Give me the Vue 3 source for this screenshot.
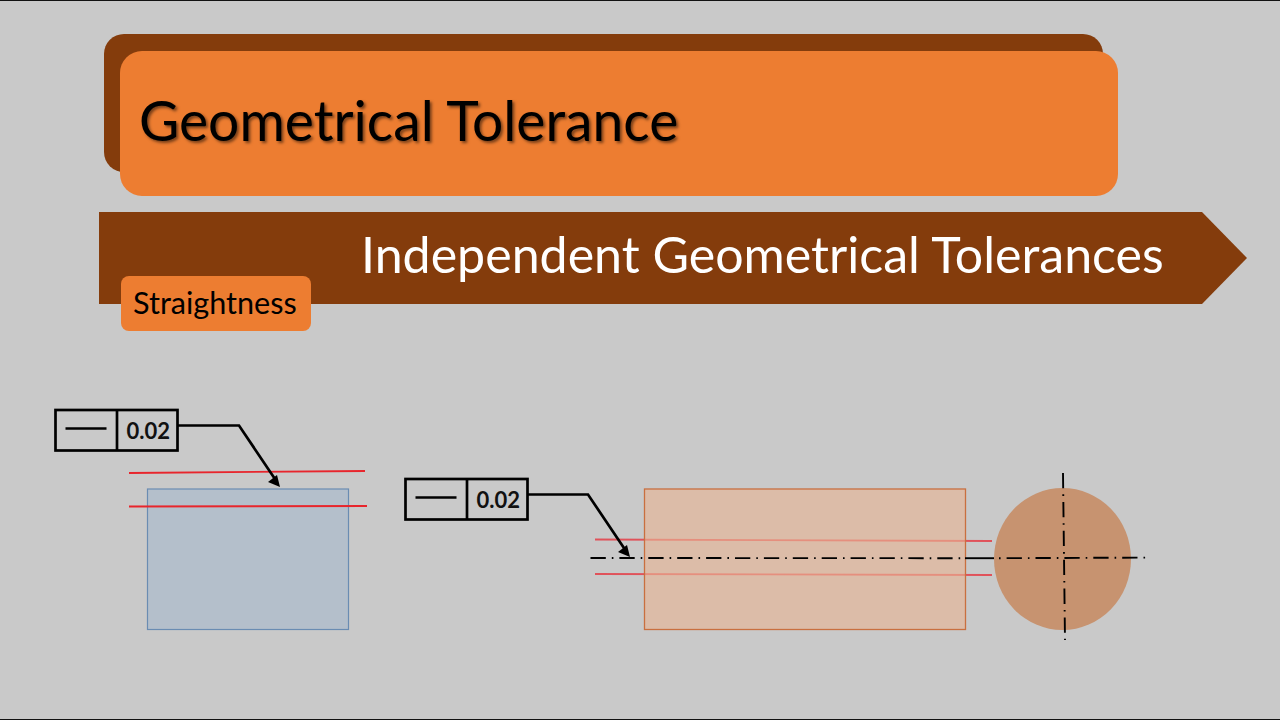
<script setup>
// tolerance frames for the two drawings: flat surface and shaft axis
const frames = [
  { x: 55.5, y: 410, leader: '178,425.5 239,425.5 277,482', tipX: 280, tipY: 487 },
  { x: 405.5, y: 479, leader: '528,494.5 588,494.5 626,551', tipX: 630, tipY: 557 }
]
</script>

<template>
  <div class="slide">
    <div class="title-wrap">
      <div class="title-back"></div>
      <div class="title-card">
        <h1>Geometrical Tolerance</h1>
      </div>
    </div>

    <div class="banner-wrap">
      <div class="banner">
        <h2>Independent Geometrical Tolerances</h2>
      </div>
      <div class="tag">Straightness</div>
    </div>

    <svg class="drawing" viewBox="0 400 1280 319" width="1280" height="319">
      <!-- flat part -->
      <rect x="147.5" y="489" width="201" height="140.5" class="blue-part" />
      <line x1="129" y1="473" x2="365" y2="471" class="red" />
      <line x1="129" y1="506.5" x2="367" y2="506" class="red" />

      <!-- shaft side view -->
      <line x1="595" y1="539.5" x2="992" y2="541" class="red soft" />
      <line x1="595" y1="574" x2="992" y2="575" class="red soft" />
      <rect x="644.5" y="489" width="321" height="140.5" class="orange-part" />
      <line x1="590.5" y1="558" x2="962" y2="558.2" class="center" />
      <line x1="965" y1="558.2" x2="994" y2="558.2" class="center solid" />

      <!-- shaft end view -->
      <ellipse cx="1062.5" cy="559" rx="68.5" ry="71" class="end-view" />
      <line x1="999" y1="558.2" x2="1146" y2="557.6" class="center from-dot" />
      <line x1="1063" y1="473" x2="1065" y2="640" class="center" />

      <!-- feature control frames -->
      <g v-for="f in frames" :key="f.x">
        <rect :x="f.x" :y="f.y" width="122" height="40.5" class="frame" />
        <line :x1="f.x + 61.5" :y1="f.y" :x2="f.x + 61.5" :y2="f.y + 40.5" class="frame" />
        <line :x1="f.x + 10" :y1="f.y + 18.5" :x2="f.x + 51" :y2="f.y + 18.5" class="symbol" />
        <text :x="f.x + 71" :y="f.y + 29" class="value">0.02</text>
        <polyline :points="f.leader" class="leader" />
        <polygon
          :points="`${f.tipX},${f.tipY} ${f.tipX - 12},${f.tipY - 5} ${f.tipX - 3},${f.tipY - 12}`"
          class="tip"
        />
      </g>
    </svg>
  </div>
</template>

<style>
html,
body {
  margin: 0;
  background: #c9c9c9;
}
</style>

<style scoped>
.slide {
  width: 1280px;
  height: 720px;
  box-sizing: border-box;
  padding-top: 50px;
  background: #c9c9c9;
  border-top: 1px solid #111;
  border-bottom: 1px solid #111;
  overflow: hidden;
  font-family: Lato, "Open Sans", sans-serif;
}

.title-wrap {
  position: relative;
  width: 998px;
  height: 145px;
  margin-left: 120px;
}
.title-back {
  position: absolute;
  left: -16px;
  top: -17px;
  width: 999px;
  height: 138px;
  border-radius: 20px;
  background: #843c0c;
}
.title-card {
  position: relative;
  height: 100%;
  box-sizing: border-box;
  padding: 37px 0 0 19px;
  border-radius: 22px;
  background: #ed7d31;
}
h1 {
  margin: 0;
  font-size: 55.2px;
  line-height: 64px;
  font-weight: 400;
  color: #000;
  white-space: nowrap;
  text-shadow: 2px 2px 3px rgba(0, 0, 0, 0.5);
}

.banner-wrap {
  position: relative;
  width: 1148px;
  height: 92px;
  margin: 16px 0 0 99px;
}
.banner {
  height: 100%;
  box-sizing: border-box;
  padding: 11px 0 0 262px;
  background: #843c0c;
  clip-path: polygon(0 0, 1103px 0, 100% 50%, 1103px 100%, 0 100%);
}
h2 {
  margin: 0;
  font-size: 50.1px;
  line-height: 62px;
  font-weight: 400;
  color: #fff;
  white-space: nowrap;
}
.tag {
  position: absolute;
  left: 22px;
  top: 64px;
  width: 190px;
  height: 55px;
  box-sizing: border-box;
  padding-left: 12px;
  border-radius: 8px;
  background: #ed7d31;
  color: #000;
  font-size: 30.6px;
  line-height: 54px;
}

.drawing {
  display: block;
  margin-top: 96px;
}
.red {
  stroke: #e8252c;
  stroke-width: 1.8;
}
.red.soft {
  stroke: #e0525a;
}
.blue-part {
  fill: #b4bfcb;
  stroke: #6a8cb2;
  stroke-width: 1.2;
}
.orange-part {
  fill: #e9b595;
  fill-opacity: 0.62;
  stroke: #c96f3f;
  stroke-width: 1.3;
}
.end-view {
  fill: #c79370;
}
.center {
  stroke: #000;
  stroke-width: 1.9;
  stroke-dasharray: 15.3 6 1.6 6;
}
.center.solid {
  stroke-dasharray: none;
}
.center.from-dot {
  stroke-dasharray: 1.6 6 15.3 6;
}
.frame {
  fill: none;
  stroke: #000;
  stroke-width: 2.7;
}
.symbol {
  stroke: #000;
  stroke-width: 2.4;
}
.value {
  font-family: Lato, "Open Sans", sans-serif;
  font-size: 22px;
  font-weight: 700;
  fill: #111;
}
.leader {
  fill: none;
  stroke: #000;
  stroke-width: 2.7;
}
.tip {
  fill: #000;
}
</style>
